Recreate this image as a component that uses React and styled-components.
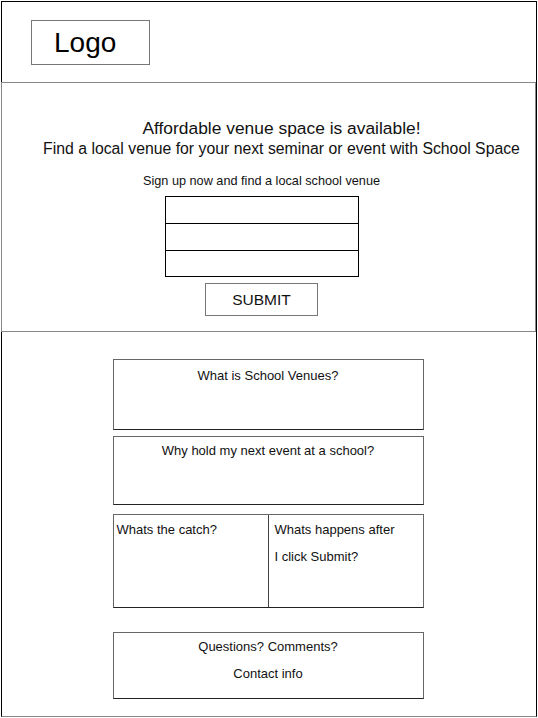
import React from "react";
import styled, { createGlobalStyle } from "styled-components";

const GlobalStyle = createGlobalStyle`
  html, body {
    margin: 0;
    padding: 0;
    background: #fff;
  }
  body {
    font-family: "Liberation Sans", Arial, sans-serif;
    color: #111;
  }
`;

const App = () => {
  return (
    <>
      <GlobalStyle />
      <Frame>
        <Header>
          <LogoBox>Logo</LogoBox>
        </Header>
        <Hero>
          <HeroHeading>
            <HeroTitle>Affordable venue space is available!</HeroTitle>
            <HeroSubtitle>
              Find a local venue for your next seminar or event with School Space
            </HeroSubtitle>
          </HeroHeading>
          <SignUp>
            <SignUpText>Sign up now and find a local school venue</SignUpText>
            <SignUpForm onSubmit={(e) => e.preventDefault()}>
              <Fields>
                <Field type="text" />
                <Field type="text" />
                <Field type="text" />
              </Fields>
              <SubmitButton type="submit">SUBMIT</SubmitButton>
            </SignUpForm>
          </SignUp>
        </Hero>
        <InfoSection>
          <Card $height={71} $pad={2}>
            <CardText>What is School Venues?</CardText>
          </Card>
          <Card $height={69} $gap={6}>
            <CardText>Why hold my next event at a school?</CardText>
          </Card>
          <SplitCard $gap={9}>
            <Cell>
              <CardText $left>Whats the catch?</CardText>
            </Cell>
            <Cell $divider>
              <CardText $left>
                Whats happens after
                <br />I click Submit?
              </CardText>
            </Cell>
          </SplitCard>
          <Card $height={67} $gap={24}>
            <CardText>Questions? Comments?</CardText>
            <CardText>Contact info</CardText>
          </Card>
        </InfoSection>
      </Frame>
    </>
  );
};

const Frame = styled.div`
  width: 536px;
  height: 716px;
  margin: 1px 0 0 1px;
  box-sizing: border-box;
  border: 1px solid #000;
  border-bottom-color: #888;
  display: flex;
  flex-direction: column;
`;

const Header = styled.header`
  height: 80px;
  padding: 18px 0 0 29px;
  box-sizing: border-box;
`;

const LogoBox = styled.div`
  width: 119px;
  height: 45px;
  box-sizing: border-box;
  border: 1px solid #777;
  padding-left: 22px;
  font-size: 28px;
  line-height: 43px;
  color: #000;
`;

const Hero = styled.section`
  margin-left: -1px;
  height: 250px;
  box-sizing: border-box;
  border: 1px solid #888;
  padding-top: 34px;
  display: flex;
  flex-direction: column;
  align-items: center;
`;

const HeroHeading = styled.div`
  padding-left: 26px;
  display: flex;
  flex-direction: column;
  align-items: center;
`;

const HeroTitle = styled.h1`
  margin: 0;
  font-weight: normal;
  font-size: 17.4px;
  line-height: 22px;
`;

const HeroSubtitle = styled.p`
  margin: 0;
  font-size: 15.8px;
  line-height: 20px;
  white-space: nowrap;
`;

const SignUp = styled.div`
  padding-right: 14px;
  display: flex;
  flex-direction: column;
  align-items: center;
`;

const SignUpText = styled.p`
  margin: 14px 0 0;
  font-size: 12.7px;
  line-height: 16px;
`;

const SignUpForm = styled.form`
  margin-top: 7px;
  display: flex;
  flex-direction: column;
  align-items: center;
  gap: 6px;
`;

const Fields = styled.div`
  width: 192px;
  border: 1px solid #000;
  display: flex;
  flex-direction: column;
`;

const Field = styled.input`
  height: 27px;
  box-sizing: border-box;
  border: none;
  border-bottom: 1px solid #000;
  margin: 0;
  padding: 0 4px;
  outline: none;
  background: #fff;

  &:last-child {
    border-bottom: none;
    height: 25px;
  }
`;

const SubmitButton = styled.button`
  width: 113px;
  height: 33px;
  box-sizing: border-box;
  border: 1px solid #777;
  background: #fff;
  font-family: "Liberation Sans", Arial, sans-serif;
  font-size: 15.5px;
  color: #111;
  padding: 0;
  cursor: pointer;
`;

const InfoSection = styled.section`
  padding: 27px 2px 0 0;
  display: flex;
  flex-direction: column;
  align-items: center;
`;

const Card = styled.div`
  width: 311px;
  height: ${(p) => p.$height}px;
  margin-top: ${(p) => p.$gap || 0}px;
  padding-top: ${(p) => p.$pad || 0}px;
  box-sizing: border-box;
  border: 1px solid #666;
  border-bottom-color: #222;
  display: flex;
  flex-direction: column;
`;

const SplitCard = styled.div`
  width: 311px;
  height: 94px;
  margin-top: ${(p) => p.$gap || 0}px;
  box-sizing: border-box;
  border: 1px solid #666;
  border-bottom-color: #222;
  display: grid;
  grid-template-columns: 154px 1fr;
`;

const Cell = styled.div`
  padding: 1px 0 0 ${(p) => (p.$divider ? 6 : 3)}px;
  border-left: ${(p) => (p.$divider ? "1.5px solid #444" : "none")};
`;

const CardText = styled.div`
  font-size: 13px;
  line-height: 27px;
  text-align: ${(p) => (p.$left ? "left" : "center")};
`;

export default App;
